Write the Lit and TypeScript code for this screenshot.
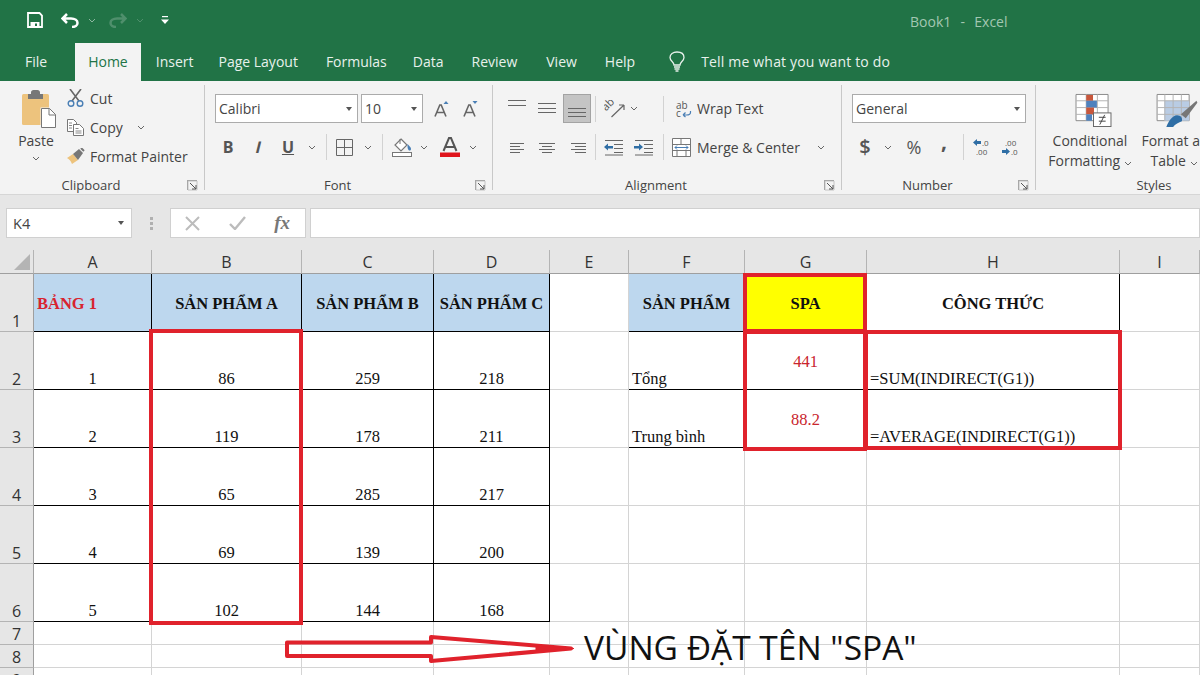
import { LitElement, html, svg, css } from "lit";
import { customElement } from "lit/decorators.js";

// small chevron used all over the ribbon
const chev = (c = "#666") => html`<svg width="8" height="5" viewBox="0 0 8 5"><path d="M1 1l3 3 3-3" fill="none" stroke=${c} stroke-width="1"/></svg>`;
const launcher = html`<svg width="11" height="11" viewBox="0 0 11 11"><path d="M.5 10V.5H10" fill="none" stroke="#8a8a8a"/><path d="M1 1h9v9H1z" fill="none" stroke="#c4c4c4"/><path d="M3 3l6 6M9 5v4H5" fill="none" stroke="#555"/></svg>`;
const lines = (rows: number[][]) => html`<svg width="20" height="18" viewBox="0 0 20 18">${rows.map((r) => svg`<rect x=${r[0]} y=${r[2]} width=${r[1] - r[0]} height="1" fill="#666"></rect>`)}</svg>`;

const COLS = [34, 118, 150, 132, 116, 79, 116, 122, 253, 80];
const ROWS = [24, 58, 58, 58, 58, 58, 58, 23, 23, 23];
const LETTERS = ["A", "B", "C", "D", "E", "F", "G", "H", "I"];

type Cell = { t?: string; cls: string };
const CELLS: Record<string, Cell> = {
  A1: { t: "BẢNG 1", cls: "tb hd head red left" },
  B1: { t: "SẢN PHẨM A", cls: "tb hd head" },
  C1: { t: "SẢN PHẨM B", cls: "tb hd head" },
  D1: { t: "SẢN PHẨM C", cls: "tb hd head" },
  F1: { t: "SẢN PHẨM", cls: "tb hd head" },
  G1: { t: "SPA", cls: "tb yellow head" },
  H1: { t: "CÔNG THỨC", cls: "tb head" },
  F2: { t: "Tổng", cls: "tb left" },
  G2: { t: "441", cls: "tb mid redtxt" },
  H2: { t: "=SUM(INDIRECT(G1))", cls: "tb left" },
  F3: { t: "Trung bình", cls: "tb left" },
  G3: { t: "88.2", cls: "tb mid redtxt" },
  H3: { t: "=AVERAGE(INDIRECT(G1))", cls: "tb left" },
};
[
  [1, 86, 259, 218],
  [2, 119, 178, 211],
  [3, 65, 285, 217],
  [4, 69, 139, 200],
  [5, 102, 144, 168],
].forEach((r, i) => {
  ["A", "B", "C", "D"].forEach((c, j) => {
    CELLS[c + (i + 2)] = { t: String(r[j]), cls: "tb" };
  });
});

@customElement("app-root")
export class AppRoot extends LitElement {
  static styles = css`
    :host {
      display: block;
      width: 1200px;
      height: 675px;
      overflow: hidden;
      position: relative;
      font-family: "Open Sans", "Noto Sans", sans-serif;
      color: #444;
      background: #e6e6e6;
    }
    .title {
      height: 43px;
      background: #217346;
      display: flex;
      align-items: center;
      padding-left: 27px;
    }
    .qat {
      display: grid;
      grid-template-columns: 16px 18px 18px 26px 4px 18px 26px 24px;
      align-items: center;
      justify-items: center;
      justify-content: start;
      width: 160px;
      margin-top: -3px;
    }
    .qc { display: flex; }
    .book {
      margin-left: 723px;
      font-size: 14px;
      color: #a3c7b2;
      white-space: pre;
      word-spacing: 1px;
    }
    .tabs {
      height: 38px;
      background: #217346;
      display: flex;
      align-items: stretch;
      color: #e8f1ec;
      font-size: 14px;
      padding-left: 25px;
    }
    .tab { display: flex; align-items: center; padding-bottom: 2px; white-space: nowrap; }
    .t-file { margin-right: 28px; }
    .tab.home { background: #f3f3f3; color: #217346; padding: 0 13px 2px; margin-right: 15px; }
    .t-ins { margin-right: 25px; }
    .t-page { margin-right: 28px; }
    .t-form { margin-right: 26px; }
    .t-data { margin-right: 28px; }
    .t-rev { margin-right: 29px; }
    .t-view { margin-right: 28px; }
    .t-help { margin-right: 34px; }
    .t-bulb { margin-right: 16px; }
    .t-tell { letter-spacing: .18px; }
    .ribbon {
      height: 114px;
      box-sizing: border-box;
      background: #f3f3f3;
      border-bottom: 1px solid #d6d6d6;
      display: flex;
      padding-top: 4px;
      font-size: 14px;
      color: #444;
      overflow: hidden;
    }
    .group {
      height: 105px;
      box-sizing: border-box;
      border-right: 1px solid #c8c8c8;
      display: flex;
      flex-direction: column;
      flex: none;
    }
    .body { height: 92px; flex: none; box-sizing: border-box; }
    .foot { display: flex; height: 16px; font-size: 13px; line-height: 16px; margin-bottom: -3px; color: #444; }
    .foot span { flex: 1; text-align: center; }
    .foot i { width: 22px; display: flex; align-items: center; justify-content: flex-start; padding-left: 5px; box-sizing: border-box; }
    .g-clip { width: 205px; }
    .g-font { width: 288px; }
    .g-align { width: 349px; }
    .g-num { width: 194px; }
    .g-style { width: 236px; border: 0; }
    .clip { display: flex; padding-left: 14px; }
    .paste { width: 44px; display: flex; flex-direction: column; align-items: center; padding-top: 5px; }
    .paste svg.pi { margin-left: 6px; }
    .paste b { font-weight: 400; line-height: 18px; margin-top: 4px; }
    .paste em { line-height: 8px; margin-top: 6px; display: flex; }
    .cliprows { margin-left: 9px; display: flex; flex-direction: column; gap: 3px; }
    .cliprow { height: 26px; display: flex; align-items: center; white-space: nowrap; }
    .cliprow .ci { width: 23px; display: flex; }
    .cliprow .cv { margin-left: 14px; display: flex; }
    .pad { padding: 9px 0 0 10px; }
    .row { display: grid; align-items: center; justify-items: center; justify-content: start; white-space: nowrap; }
    .row.one { height: 29px; }
    .row.two { height: 28px; margin-top: 10px; }
    .font1 { grid-template-columns: 143px 3px 62px 11px 14px 15px 14px; }
    .font2 { grid-template-columns: 26px 36px 22px 26px 2px 34px 14px 14px 26px 18px 34px 12px; }
    .al1 { grid-template-columns: 28px 32px 28px 8px 30px 10px 16px 16px 24px auto; }
    .al2 { grid-template-columns: 28px 32px 28px 8px 29px 30px 10px 27px auto 42px; }
    .num1 { grid-template-columns: 174px; }
    .num2 { grid-template-columns: 26px 20px 32px 28px 10px 28px 30px; }
    .box {
      height: 29px;
      width: 100%;
      box-sizing: border-box;
      background: #fff;
      border: 1px solid #ababab;
      display: flex;
      align-items: center;
      justify-content: space-between;
      padding: 0 5px 0 3px;
      color: #444;
    }
    .caret { width: 0; height: 0; border: 3.5px solid transparent; border-top: 4px solid #555; border-bottom: 0; }
    .sep { width: 1px; height: 26px; background: #d2d2d2; }
    .sel { width: 28px; height: 29px; background: #c4c4c4; border: 1px solid #a3a3a3; box-sizing: border-box; display: flex; align-items: center; justify-content: center; }
    .wrap { margin-left: 2px; justify-self: start; }
    .glyph { font-weight: 700; color: #555; font-size: 16px; line-height: 1; }
    .ital { display: inline-block; transform: skewX(-14deg); }
    .und { text-decoration: underline; }
    .dollar { font-size: 20px; font-weight: 600; }
    .pct { font-size: 18px; font-weight: 400; }
    .comma { font-size: 21px; margin-top: -11px; }
    .big { display: flex; padding: 8px 0 0 4px; }
    .bigc { flex: none; display: flex; flex-direction: column; align-items: center; line-height: 20px; white-space: nowrap; }
    .bigc svg.ico { height: 34px; margin-bottom: 4px; }
    .c1 svg.ico { margin-left: 7px; }
    .c2 svg.ico { margin-left: 5px; }
    .c1 { width: 100px; }
    .c2 { width: 68px; }
    .fbar {
      height: 55px;
      box-sizing: border-box;
      padding: 13px 0 0 6px;
      background: #e6e6e6;
      display: flex;
      align-items: flex-start;
    }
    .fld { height: 30px; box-sizing: border-box; background: #fff; border: 1px solid #d0d0d0; display: flex; align-items: center; }
    .name { width: 126px; padding: 0 7px 0 6px; justify-content: space-between; font-size: 14.500px; color: #444; }
    .dots { width: 38px; display: flex; flex-direction: column; align-items: center; justify-content: center; gap: 2px; height: 30px; }
    .dots i { width: 3px; height: 3px; background: #b0b0b0; }
    .fx { width: 136px; justify-content: space-between; padding: 0 15px 0 14px; }
    .fxt { font-family: "Liberation Serif", serif; font-style: italic; font-weight: 700; font-size: 19px; color: #777; }
    .input { width: 890px; margin-left: 4px; }
    .sheet {
      position: relative;
      display: grid;
      background: #fff;
      font-family: "Liberation Serif", "Noto Sans", serif;
      font-size: 16.500px;
      color: #111;
    }
    .c { box-sizing: border-box; border-right: 1px solid #d4d4d4; border-bottom: 1px solid #d4d4d4; display: flex; align-items: flex-end; justify-content: center; white-space: nowrap; overflow: hidden; }
    .tb { border-right-color: #000; border-bottom-color: #000; }
    .hd { background: #bdd7ee; }
    .yellow { background: #ff0; }
    .head { align-items: center; font-weight: 700; padding-top: 2px; }
    .red { color: #d8232f; }
    .left { justify-content: flex-start; padding-left: 3px; }
    .mid { align-items: center; padding-top: 2px; }
    .redtxt { color: #c9252d; }
    .ch, .rh {
      background: #e6e6e6;
      font-family: "Open Sans", sans-serif;
      font-size: 16px;
      color: #333;
      display: flex;
      justify-content: center;
      box-sizing: border-box;
    }
    .ch { align-items: center; border-right: 1px solid #b4b4b4; border-bottom: 1px solid #9f9f9f; }
    .rh { align-items: flex-end; border-right: 1px solid #9f9f9f; border-bottom: 1px solid #b4b4b4; line-height: 20px; }
    .corner { background: #e6e6e6; border-right: 1px solid #b4b4b4; border-bottom: 1px solid #9f9f9f; box-sizing: border-box; display: flex; align-items: flex-end; justify-content: flex-end; padding: 0 3px 3px 0; }
    .over { position: absolute; left: 0; top: -250px; pointer-events: none; }
    .note {
      position: absolute;
      left: 584px;
      top: 375px;
      font-family: "Open Sans", sans-serif;
      font-size: 33.500px;
      line-height: 44px;
      color: #111;
      white-space: nowrap;
    }
  `;

  private renderRibbon() {
    return html`
      <div class="ribbon">
        <div class="group g-clip">
          <div class="body clip">
            <div class="paste">
              <svg class="pi" width="35" height="38" viewBox="0 0 35 38">
                <rect x="0" y="4" width="27" height="31" rx="1.500" fill="#edc37d"/>
                <path d="M9 4V2.500C9 1 10 0 11.500 0h4C17 0 18 1 18 2.500V4h3v5H6V4z" fill="#777"/>
                <path d="M18.500 17.500h9.500l6.500 6.500v14h-16z" fill="#f3f3f3"/>
                <path d="M19.500 18.500h8l6 6v13h-14z" fill="#fff" stroke="#777"/>
                <path d="M27 18.500v6.500h6.500" fill="none" stroke="#777"/>
              </svg>
              <b>Paste</b>
              <em>${chev()}</em>
            </div>
            <div class="cliprows">
              <div class="cliprow"><span class="ci"><svg width="17" height="18" viewBox="0 0 17 18"><path d="M3 0l9 12M14 0L5 12" stroke="#666" stroke-width="1.600" fill="none"/><circle cx="4" cy="14.500" r="2.800" fill="none" stroke="#4a7fb5" stroke-width="1.400"/><circle cx="13" cy="14.500" r="2.800" fill="none" stroke="#4a7fb5" stroke-width="1.400"/></svg></span>Cut</div>
              <div class="cliprow"><span class="ci"><svg width="17" height="17" viewBox="0 0 17 17"><path d="M.5.500h6l3 3v9h-9z" fill="#fff" stroke="#777"/><path d="M6.500 5.500h6l4 4v7h-10z" fill="#fff" stroke="#777"/><path d="M2 4h3M2 6.500h3M2 9h3M8.500 9.500h3M8.500 12h6M8.500 14h6" stroke="#888"/></svg></span>Copy<span class="cv">${chev()}</span></div>
              <div class="cliprow"><span class="ci"><svg width="18" height="16" viewBox="0 0 18 16"><path d="M0 10l6-4 5 6-6 4c-1-3-3-5-5-6z" fill="#edc37d"/><path d="M6 6l6-5 4 4-5 7z" fill="#777"/><path d="M14 0l3 3" stroke="#777" stroke-width="2"/></svg></span>Format Painter</div>
            </div>
          </div>
          <div class="foot"><span>Clipboard</span><i>${launcher}</i></div>
        </div>

        <div class="group g-font">
          <div class="body pad">
            <div class="row one font1">
              <div class="box"><span>Calibri</span><i class="caret"></i></div>
              <span></span>
              <div class="box"><span>10</span><i class="caret"></i></div>
              <span></span>
              <svg width="15" height="16" viewBox="0 0 15 16"><path d="M1 15.500L5.800 4h1.400L12 15.500M3 11.500h7" fill="none" stroke="#666" stroke-width="1.600"/><path d="M9.500 3L12 0l2.500 3z" fill="#4a7fb5"/></svg>
              <span></span>
              <svg width="15" height="16" viewBox="0 0 15 16"><path d="M1 15.500L5.800 4h1.400L12 15.500M3 11.500h7" fill="none" stroke="#666" stroke-width="1.600"/><path d="M9.500 0L12 3l2.500-3z" fill="#4a7fb5"/></svg>
            </div>
            <div class="row two font2">
              <span class="glyph">B</span>
              <span class="glyph ital">I</span>
              <span class="glyph und">U</span>
              ${chev()}
              <i class="sep"></i>
              <svg width="17" height="17" viewBox="0 0 17 17"><path d="M.5.500h16v16H.5zM8.500.500v16M.5 8.500h16" fill="none" stroke="#666"/></svg>
              ${chev()}
              <i class="sep"></i>
              <svg width="20" height="19" viewBox="0 0 20 19"><path d="M9 1l6 6-6 6-6-6z" fill="#fff" stroke="#777" stroke-width="1.200"/><path d="M8 1V6" stroke="#777"/><path d="M15.500 6c2 2 3.500 3.500 3.500 5s-1.500 2-2.500 1-1-3-1-6z" fill="#4a7fb5"/><rect x=".5" y="14.500" width="19" height="4" fill="#fff" stroke="#777"/></svg>
              ${chev()}
              <svg width="20" height="20" viewBox="0 0 20 20"><path d="M3.500 14L9 1h2l5.500 13M6 10h8" fill="none" stroke="#555" stroke-width="2"/><rect y="15.500" width="20" height="4.500" fill="#e0141c"/></svg>
              ${chev()}
            </div>
          </div>
          <div class="foot"><span>Font</span><i>${launcher}</i></div>
        </div>

        <div class="group g-align">
          <div class="body pad">
            <div class="row one al1">
              ${lines([[1, 19, 0], [1, 19, 5]])}
              ${lines([[1, 19, 3], [1, 19, 8], [1, 19, 12]])}
              <div class="sel">${lines([[1, 19, 8], [1, 19, 12], [1, 19, 16]])}</div>
              <i class="sep"></i>
              <svg width="21" height="18" viewBox="0 0 21 18"><text transform="translate(2 11.500) rotate(-45)" font-size="11" fill="#555" font-family="Open Sans">ab</text><path d="M7.500 17L20 5M20 5h-5M20 5v5" fill="none" stroke="#666" stroke-width="1.200"/></svg>
              ${chev()}
              <span></span>
              <i class="sep"></i>
              <svg width="17" height="18" viewBox="0 0 17 18"><path d="M15.500 11v1.500c0 2-2 2.500-4 2.500H8M8 15l2.500-2.500M8 15l2.500 2" fill="none" stroke="#4a7fb5" stroke-width="1.200"/><text x="1" y="8.500" font-size="10" fill="#555" font-family="Open Sans">ab</text><text x="1" y="17" font-size="10" fill="#555" font-family="Open Sans">c</text></svg>
              <span class="wrap">Wrap Text</span>
            </div>
            <div class="row two al2">
              ${lines([[3, 17, 5], [3, 13, 8], [3, 17, 11], [3, 13, 14]])}
              ${lines([[2, 18, 5], [5, 15, 8], [2, 18, 11], [5, 15, 14]])}
              ${lines([[4, 19, 5], [8, 19, 8], [4, 19, 11], [8, 19, 14]])}
              <i class="sep"></i>
              <svg width="19" height="17" viewBox="0 0 19 17"><path d="M1 1.500h18M10 5.500h9M10 9.500h9M10 13.500h9M1 16h18" stroke="#666" fill="none"/><path d="M0 8l4-3.500V7h5v2.500H4V11.500z" fill="#2f6ea5"/></svg>
              <svg width="19" height="17" viewBox="0 0 19 17"><path d="M1 1.500h18M10 5.500h9M10 9.500h9M10 13.500h9M1 16h18" stroke="#666" fill="none"/><path d="M9 8L5 4.500V7H0v2.500h5V11.500z" fill="#2f6ea5"/></svg>
              <i class="sep"></i>
              <svg width="19" height="19" viewBox="0 0 19 19"><path d="M.5.500h18v18H.5zM.5 6.500h18M.5 12.500h18M9 .500v6M5 12.500v6M14 12.500v6" fill="#fff" stroke="#777"/><rect x="1" y="7" width="17" height="5" fill="#fff"/><path d="M3 9.500h13M3 9.500l2-2M3 9.500l2 2M16 9.500l-2-2M16 9.500l-2 2" fill="none" stroke="#4a7fb5"/></svg>
              <span class="wrap">Merge &amp; Center</span>
              ${chev()}
            </div>
          </div>
          <div class="foot"><span>Alignment</span><i>${launcher}</i></div>
        </div>

        <div class="group g-num">
          <div class="body pad">
            <div class="row one num1">
              <div class="box"><span>General</span><i class="caret"></i></div>
            </div>
            <div class="row two num2">
              <span class="glyph dollar">$</span>
              ${chev()}
              <span class="glyph pct">%</span>
              <span class="glyph comma">,</span>
              <i class="sep"></i>
              <svg width="18" height="18" viewBox="0 0 18 18"><path d="M0 4.500L4 1v2h4v3H4v2z" fill="#2f6ea5"/><text x="9" y="8" font-size="8" fill="#555" font-family="Open Sans">.0</text><text x="3" y="17" font-size="8" fill="#555" font-family="Open Sans">.00</text></svg>
              <svg width="18" height="18" viewBox="0 0 18 18"><path d="M8 13.500L4 10v2H0v3h4v2z" fill="#2f6ea5"/><text x="3" y="8" font-size="8" fill="#555" font-family="Open Sans">.00</text><text x="9" y="17" font-size="8" fill="#555" font-family="Open Sans">.0</text></svg>
            </div>
          </div>
          <div class="foot"><span>Number</span><i>${launcher}</i></div>
        </div>

        <div class="group g-style">
          <div class="body big">
            <div class="bigc c1">
              <svg class="ico" width="37" height="35" viewBox="0 0 37 35">
                <path d="M.5 1.500h33v27H.5z" fill="#fff" stroke="#888"/>
                <path d="M.5 8h33M.5 15h33M.5 22h33M11 1.500v27M22.500 1.500v27" stroke="#b4b4b4" fill="none"/>
                <rect x="11" y="2" width="7" height="6" fill="#c8573c"/><rect x="11" y="8" width="11" height="7" fill="#4f81bd"/>
                <rect x="11" y="15" width="8" height="7" fill="#c8573c"/><rect x="11" y="22" width="6" height="6.500" fill="#4f81bd"/>
                <rect x="18.500" y="20.500" width="18" height="14" fill="#fff" stroke="#666"/>
                <path d="M24 25h7M24 29h7M30 22.500l-5 10" stroke="#444" fill="none"/>
              </svg>
              <span>Conditional</span>
              <span>Formatting ${chev()}</span>
            </div>
            <div class="bigc c2">
              <svg class="ico" width="42" height="35" viewBox="0 0 42 35">
                <path d="M.5 1.500h33v27H.5z" fill="#fff" stroke="#888"/>
                <rect x="8" y="8" width="25.500" height="20.500" fill="#b9cce4"/>
                <path d="M.5 8h33M.5 15h33M.5 22h33M8.500 1.500v27M17 1.500v27M25.500 1.500v27" stroke="#b4b4b4" fill="none"/>
                <path d="M25 22L41 8l1 2-12 16z" fill="#777"/>
                <path d="M10 35c2-5 6-12 11-12 4 0 6 3 5 6-3 1-7 3-9 6z" fill="#2f6ea5"/>
              </svg>
              <span>Format as</span>
              <span>Table ${chev()}</span>
            </div>
          </div>
          <div class="foot"><span>Styles</span></div>
        </div>
      </div>
    `;
  }

  private renderSheet() {
    const tpl = `grid-template-columns:${COLS.join("px ")}px;grid-template-rows:${ROWS.join("px ")}px`;
    const cells = [];
    cells.push(html`<div class="corner"><svg width="16" height="16" viewBox="0 0 16 16"><path d="M16 0v16H0z" fill="#b4b4b4"/></svg></div>`);
    LETTERS.forEach((l) => cells.push(html`<div class="ch">${l}</div>`));
    for (let r = 1; r < ROWS.length; r++) {
      cells.push(html`<div class="rh">${r}</div>`);
      LETTERS.forEach((l) => {
        const cell = CELLS[l + r];
        cells.push(html`<div class="c ${cell ? cell.cls : ""}">${cell ? cell.t : ""}</div>`);
      });
    }
    return html`
      <div class="sheet" style=${tpl}>
        ${cells}
        <svg class="over" width="1200" height="675" viewBox="0 0 1200 675" fill="none" stroke="#e0222c" stroke-width="4">
          <rect x="151" y="331" width="150" height="292"/>
          <rect x="745" y="275" width="120" height="56"/>
          <rect x="745" y="332" width="120" height="117"/>
          <rect x="866" y="332" width="254" height="116"/>
          <path d="M287 642.500H431V637L571 648.500L431 661V656H287Z" stroke-linejoin="round"/>
          <path d="M536 646L574 648.500L536 651Z" fill="#e0222c" stroke-width="1"/>
        </svg>
        <div class="note">VÙNG ĐẶT TÊN "SPA"</div>
      </div>
    `;
  }

  render() {
    return html`
      <div class="title">
        <div class="qat">
          <svg width="16" height="16" viewBox="0 0 16 16"><path d="M1 1h11.500L15 3.500V15H1z" fill="none" stroke="#fff" stroke-width="1.800"/><path d="M3.500 10h9v5h-9z" fill="#fff"/><rect x="8" y="11.500" width="2" height="2.500" fill="#217346"/></svg>
          <span></span>
          <svg width="18" height="15" viewBox="0 0 18 15"><path d="M6 1L1.500 5.500 6 10M2 5.500h8c4 0 6.500 2 6.500 4.500S14 14 11 14" fill="none" stroke="#fff" stroke-width="2.500"/></svg>
          <span class="qc">${chev("#8db7a0")}</span>
          <span></span>
          <svg width="18" height="15" viewBox="0 0 18 15"><path d="M12 1l4.500 4.500L12 10M16 5.500H8C4 5.500 1.500 7.500 1.500 10S4 14 7 14" fill="none" stroke="#4f8f6c" stroke-width="2.500"/></svg>
          <span class="qc">${chev("#4f8f6c")}</span>
          <svg width="8" height="9" viewBox="0 0 8 9"><rect x="1" y="0" width="6" height="1.200" fill="#fff"/><path d="M0 3.500h8L4 8z" fill="#fff"/></svg>
        </div>
        <div class="book">Book1  -  Excel</div>
      </div>
      <div class="tabs">
        <div class="tab t-file">File</div>
        <div class="tab home">Home</div>
        <div class="tab t-ins">Insert</div>
        <div class="tab t-page">Page Layout</div>
        <div class="tab t-form">Formulas</div>
        <div class="tab t-data">Data</div>
        <div class="tab t-rev">Review</div>
        <div class="tab t-view">View</div>
        <div class="tab t-help">Help</div>
        <div class="tab t-bulb"><svg width="16" height="21" viewBox="0 0 16 21"><path d="M5 14c0-3-4-4-4-7.500C1 3 4 1 8 1s7 2 7 5.500C15 10 11 11 11 14z" fill="none" stroke="#e8f1ec" stroke-width="1.300"/><path d="M5 16h6M5.500 18h5M6.500 20h3" stroke="#e8f1ec" stroke-width="1.300"/></svg></div>
        <div class="tab t-tell">Tell me what you want to do</div>
      </div>
      ${this.renderRibbon()}
      <div class="fbar">
        <div class="fld name"><span>K4</span><i class="caret"></i></div>
        <div class="dots"><i></i><i></i><i></i></div>
        <div class="fld fx">
          <svg width="15" height="15" viewBox="0 0 15 15"><path d="M1 1l13 13M14 1L1 14" stroke="#bcbcbc" stroke-width="2"/></svg>
          <svg width="17" height="14" viewBox="0 0 17 14"><path d="M1 8l5 5L16 1" stroke="#bcbcbc" stroke-width="2.400" fill="none"/></svg>
          <span class="fxt">fx</span>
        </div>
        <div class="fld input"></div>
      </div>
      ${this.renderSheet()}
    `;
  }
}
